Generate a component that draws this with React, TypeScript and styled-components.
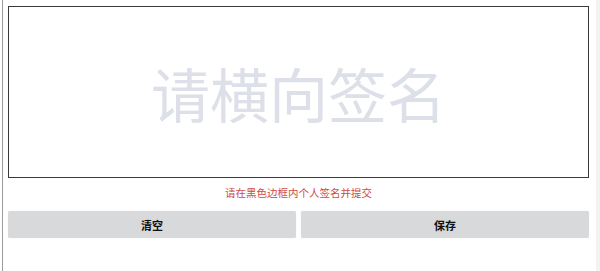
import React from 'react';
import styled, { createGlobalStyle } from 'styled-components';

const GlobalStyle = createGlobalStyle`
  html, body {
    margin: 0;
    padding: 0;
    background: #fff;
    font-family: "Noto Sans CJK SC", "Noto Sans", sans-serif;
  }
`;

const Frame = styled.div`
  display: flex;
  height: 271px;
  margin-left: 2px;
  border-left: 1px solid #9c9c9c;
`;

const Main = styled.div`
  flex: 1;
  display: flex;
  flex-direction: column;
  padding: 6px 7px 0 5px;
`;

const Scrollbar = styled.div`
  width: 4px;
  background: #f3f3f3;
`;

const SignBoard = styled.div`
  height: 170px;
  border: 1px solid #3a3a3a;
  display: flex;
  align-items: center;
  justify-content: center;
`;

const Placeholder = styled.span`
  font-size: 59px;
  line-height: 1;
  color: #dde0e8;
  user-select: none;
`;

const Tip = styled.p`
  margin: 8px 0 0;
  text-align: center;
  font-size: 10.5px;
  line-height: 14px;
  color: #cf4a42;
`;

const Actions = styled.div`
  display: grid;
  grid-template-columns: 1fr 1fr;
  gap: 5px;
  margin-top: 11px;
`;

const Button = styled.button`
  height: 27px;
  border: none;
  border-radius: 2px;
  background: #d8d9da;
  color: #111;
  font-family: inherit;
  font-size: 11px;
  font-weight: 700;
  box-shadow: 0 0 1px rgba(0, 0, 0, 0.15);
  cursor: pointer;
`;

export default function App() {
  return (
    <>
      <GlobalStyle />
      <Frame>
        <Main>
          <SignBoard>
            <Placeholder>请横向签名</Placeholder>
          </SignBoard>
          <Tip>请在黑色边框内个人签名并提交</Tip>
          <Actions>
            <Button>清空</Button>
            <Button>保存</Button>
          </Actions>
        </Main>
        <Scrollbar />
      </Frame>
    </>
  );
}
